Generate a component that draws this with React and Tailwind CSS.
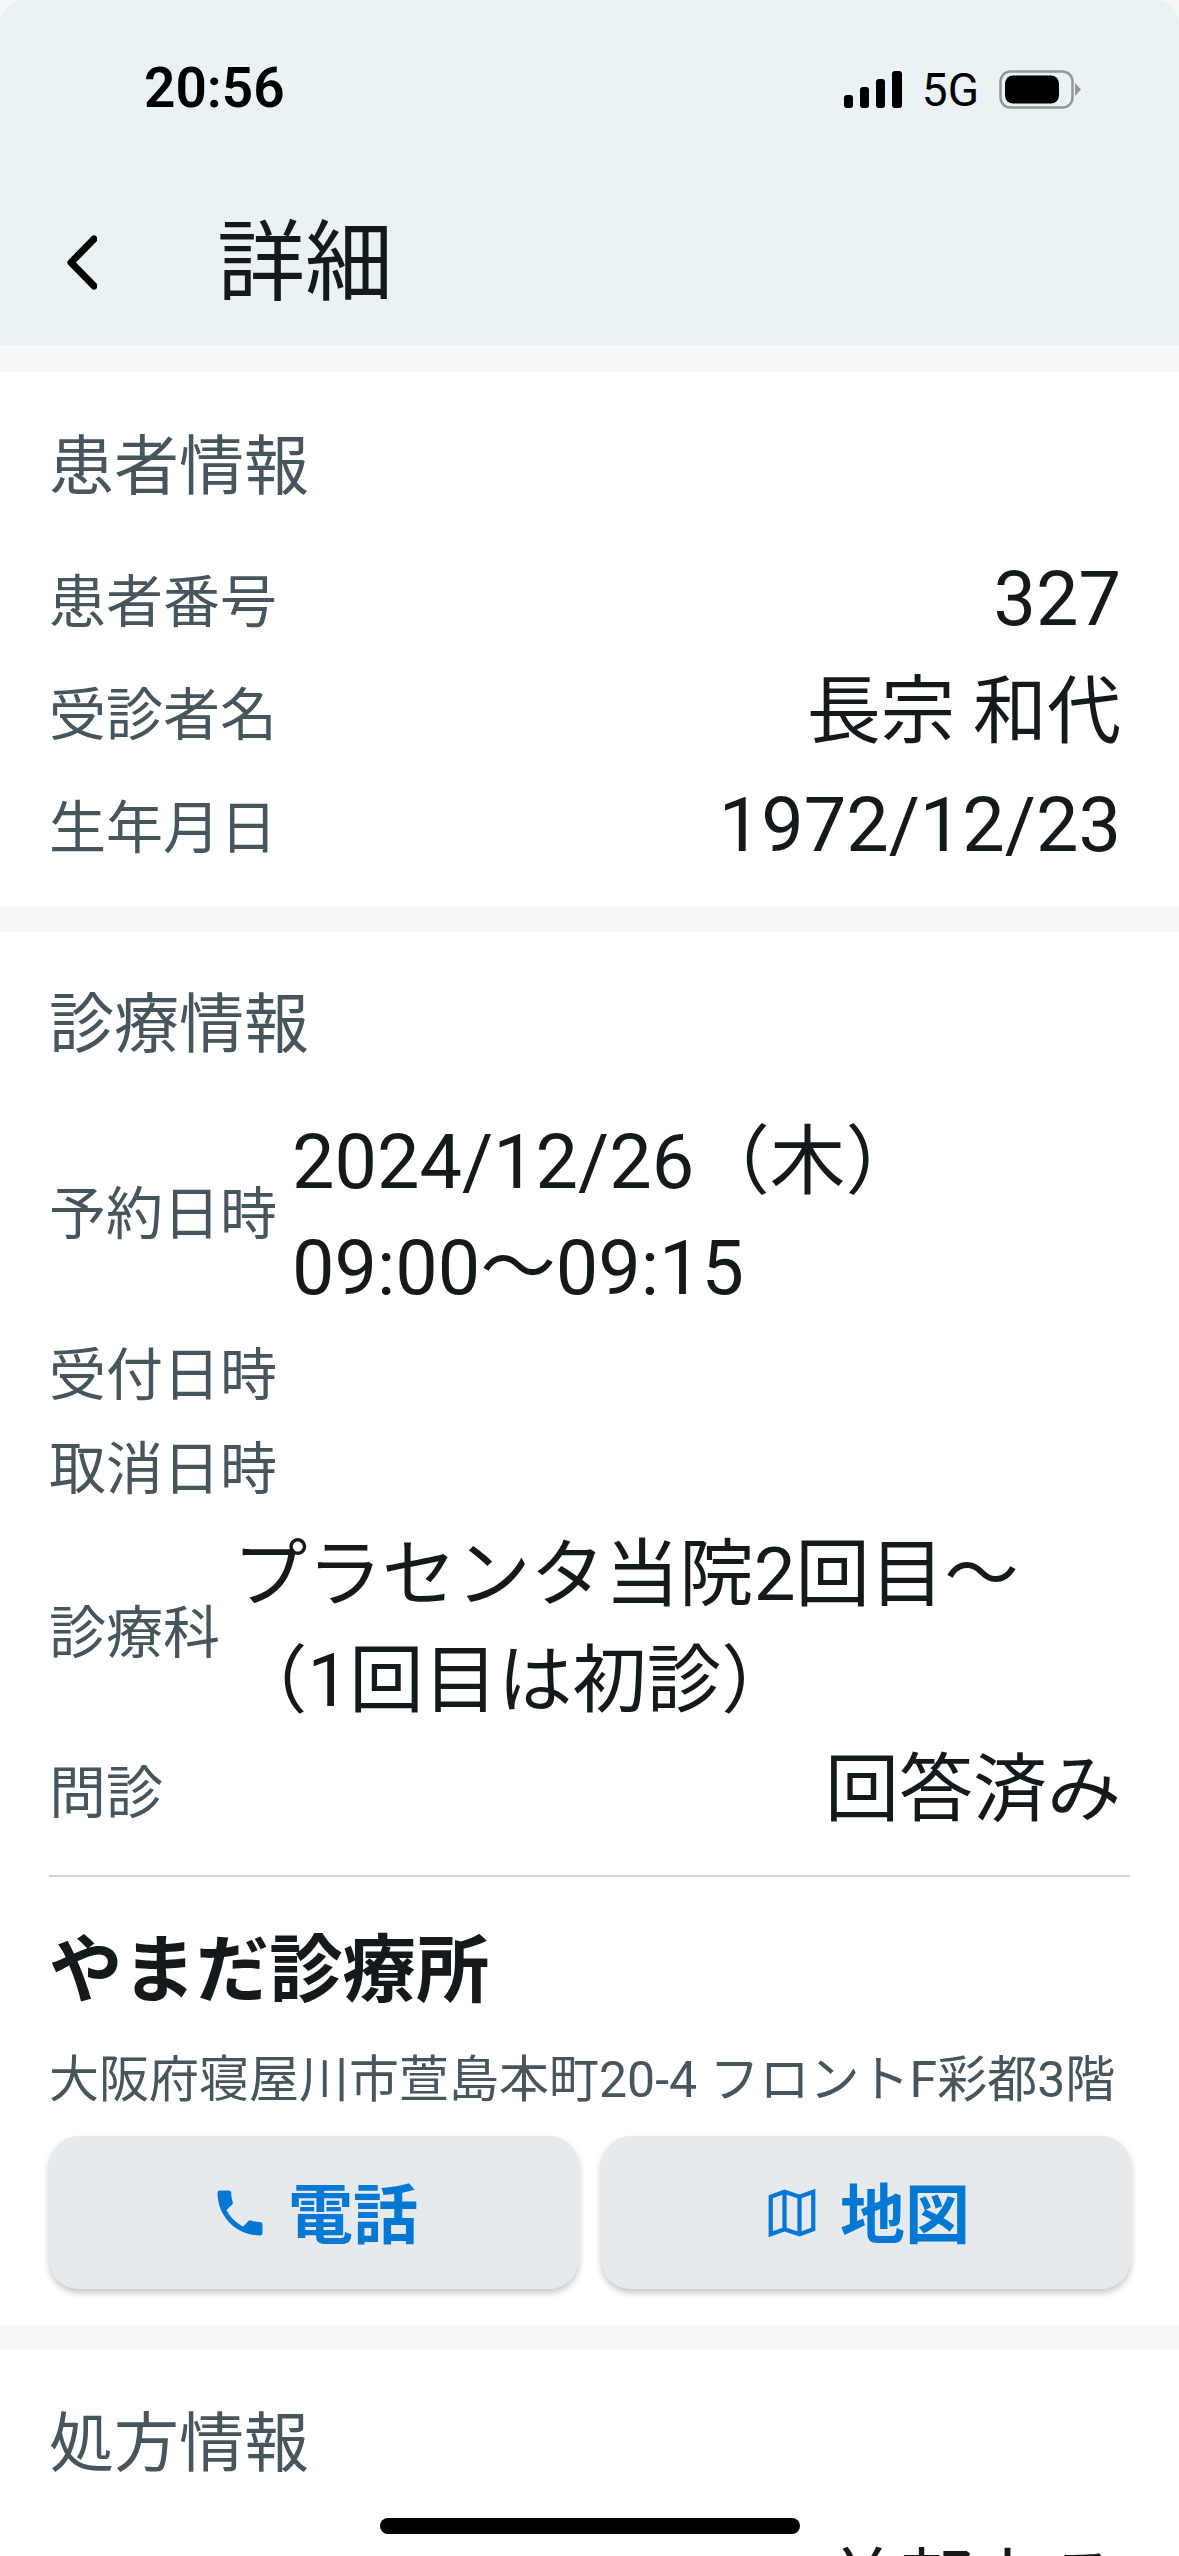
import React from 'react';

const jp = '[font-family:"Roboto","Noto_Sans_CJK_JP",sans-serif]';

const Row = ({ label, value, cjk = false, className = '' }) => (
  <div className={`flex items-center justify-between ${className}`}>
    <span className="text-[57px] leading-[80px] text-[#47555c]">{label}</span>
    <span className={`${cjk ? 'text-[74px]' : 'text-[75.6px]'} mb-[8px] leading-[76px] text-[#14191c]`}>{value}</span>
  </div>
);

const Section = ({ title, children, className = '' }) => (
  <section className={`bg-white pl-[49px] pr-[58px] ${className}`}>
    <h2 className="text-[65px] leading-[90px] text-[#47555c]">{title}</h2>
    {children}
  </section>
);

const PhoneIcon = () => (
  <svg width="60" height="60" viewBox="0 0 24 24" fill="#0078d4">
    <path d="M6.6 10.8c1.4 2.8 3.8 5.1 6.6 6.6l2.2-2.2c.3-.3.7-.4 1-.2 1.1.4 2.3.6 3.6.6.6 0 1 .4 1 1V20c0 .6-.4 1-1 1C10.600 21 3 13.400 3 4c0-.6.4-1 1-1h3.500c.6 0 1 .4 1 1 0 1.300.2 2.500.6 3.600.1.300 0 .7-.2 1l-2.300 2.200z" />
  </svg>
);

const MapIcon = () => (
  <svg width="60" height="60" viewBox="0 0 24 24" fill="none" stroke="#0078d4" strokeWidth="1.7">
    <path d="M3.500 5.500 9 3.500l6 2 5.500-2v15l-5.500 2-6-2-5.500 2z" />
    <path d="M9 3.500v15M15 5.500v15" />
  </svg>
);

export default function App() {
  return (
    <div className={`${jp} relative h-[2556px] w-[1179px] overflow-hidden bg-[#f5f7f9]`}>
      <header className="h-[345px] rounded-t-[24px] bg-[#ebf2f5]">
        <div className="flex h-[176px] items-start justify-between pl-[144px] pr-[98px] pt-[59px]">
          <span className="text-[55px] leading-[58px] font-semibold text-black">20:56</span>
          <div className="flex items-center gap-[20px] pt-[8px]">
            <svg width="58" height="38" viewBox="0 0 58 38" fill="#000">
              <rect x="0" y="24" width="9" height="13" rx="3" />
              <rect x="16" y="16" width="9" height="21" rx="3" />
              <rect x="32" y="8" width="9" height="29" rx="3" />
              <rect x="48" y="0" width="10" height="37" rx="3" />
            </svg>
            <span className="text-[46px] leading-[46px] text-black">5G</span>
            <svg width="82" height="40" viewBox="0 0 82 40">
              <rect x="1.500" y="1.500" width="72" height="36" rx="10" fill="none" stroke="#93979a" strokeWidth="2.500" />
              <rect x="6" y="5.500" width="54" height="28" rx="8" fill="#000" />
              <path d="M76 13l6 6.500-6 6.500z" fill="#93979a" />
            </svg>
          </div>
        </div>
        <div className="flex h-[169px] items-center">
          <svg width="31" height="55" viewBox="0 0 31 55" fill="none" stroke="#000" strokeWidth="7" strokeLinecap="round" strokeLinejoin="round" className="ml-[66px] mt-[3px]">
            <path d="M28 4 5 27.500 28 51" />
          </svg>
          <h1 className="ml-[120px] mt-[5px] text-[88px] leading-[118px] text-[#14191c]">詳細</h1>
        </div>
      </header>

      <Section title="患者情報" className="mt-[27px] h-[534px] pt-[50px]">
        <div className="mt-[49px] flex flex-col gap-[29px]">
          <Row label="患者番号" value="327" />
          <Row label="受診者名" value="長宗 和代" cjk />
          <Row label="生年月日" value="1972/12/23" />
        </div>
      </Section>

      <Section title="診療情報" className="mt-[26px] h-[1393px] pt-[48px]">
        <div className="mt-[39px] flex items-center gap-[15px]">
          <span className="text-[57px] leading-[80px] text-[#47555c]">予約日時</span>
          <span className="text-[75.6px] leading-[106px] text-[#14191c]">2024/12/26（木）<br />09:00〜09:15</span>
        </div>
        <div className="mt-[8px] text-[57px] leading-[94px] text-[#47555c]">
          <div>受付日時</div>
          <div>取消日時</div>
        </div>
        <div className="mt-[5px] flex items-center gap-[13px]">
          <span className="shrink-0 text-[57px] leading-[80px] text-[#47555c]">診療科</span>
          <span className="mb-[12px] text-[74.4px] leading-[106px] text-[#14191c]">プラセンタ当院2回目〜<br />（1回目は初診）</span>
        </div>
        <Row label="問診" value="回答済み" cjk className="mt-[6px]" />
        <div className="mr-[-9px] mt-[39px] border-t-2 border-[#cdd6da]" />
        <h3 className="mt-[44px] text-[73.4px] leading-[100px] font-bold text-[#14191c]">やまだ診療所</h3>
        <p className="mt-[25px] whitespace-nowrap text-[50px] leading-[68px] text-[#47555c]">大阪府寝屋川市萱島本町20-4 フロントF彩都3階</p>
        <div className="mr-[-10px] mt-[22px] grid grid-cols-2 gap-[22px]">
          <button className="flex h-[153px] items-center justify-center gap-[18px] rounded-[30px] bg-[#e7eaed] text-[65px] font-bold text-[#0078d4] shadow-[0_4px_6px_rgba(0,0,0,0.22)]">
            <PhoneIcon /><span className="mt-[8px]">電話</span>
          </button>
          <button className="flex h-[153px] items-center justify-center gap-[18px] rounded-[30px] bg-[#e7eaed] text-[65px] font-bold text-[#0078d4] shadow-[0_4px_6px_rgba(0,0,0,0.22)]">
            <MapIcon /><span className="mt-[8px]">地図</span>
          </button>
        </div>
      </Section>

      <Section title="処方情報" className="mt-[24px] h-[400px] pt-[50px]">
        <div className="mt-[53px] flex justify-end">
          <span className="text-[74px] leading-[84px] text-[#14191c]">差部上る</span>
        </div>
      </Section>

      <div className="absolute bottom-[22px] left-[380px] h-[16px] w-[420px] rounded-full bg-black" />
    </div>
  );
}
